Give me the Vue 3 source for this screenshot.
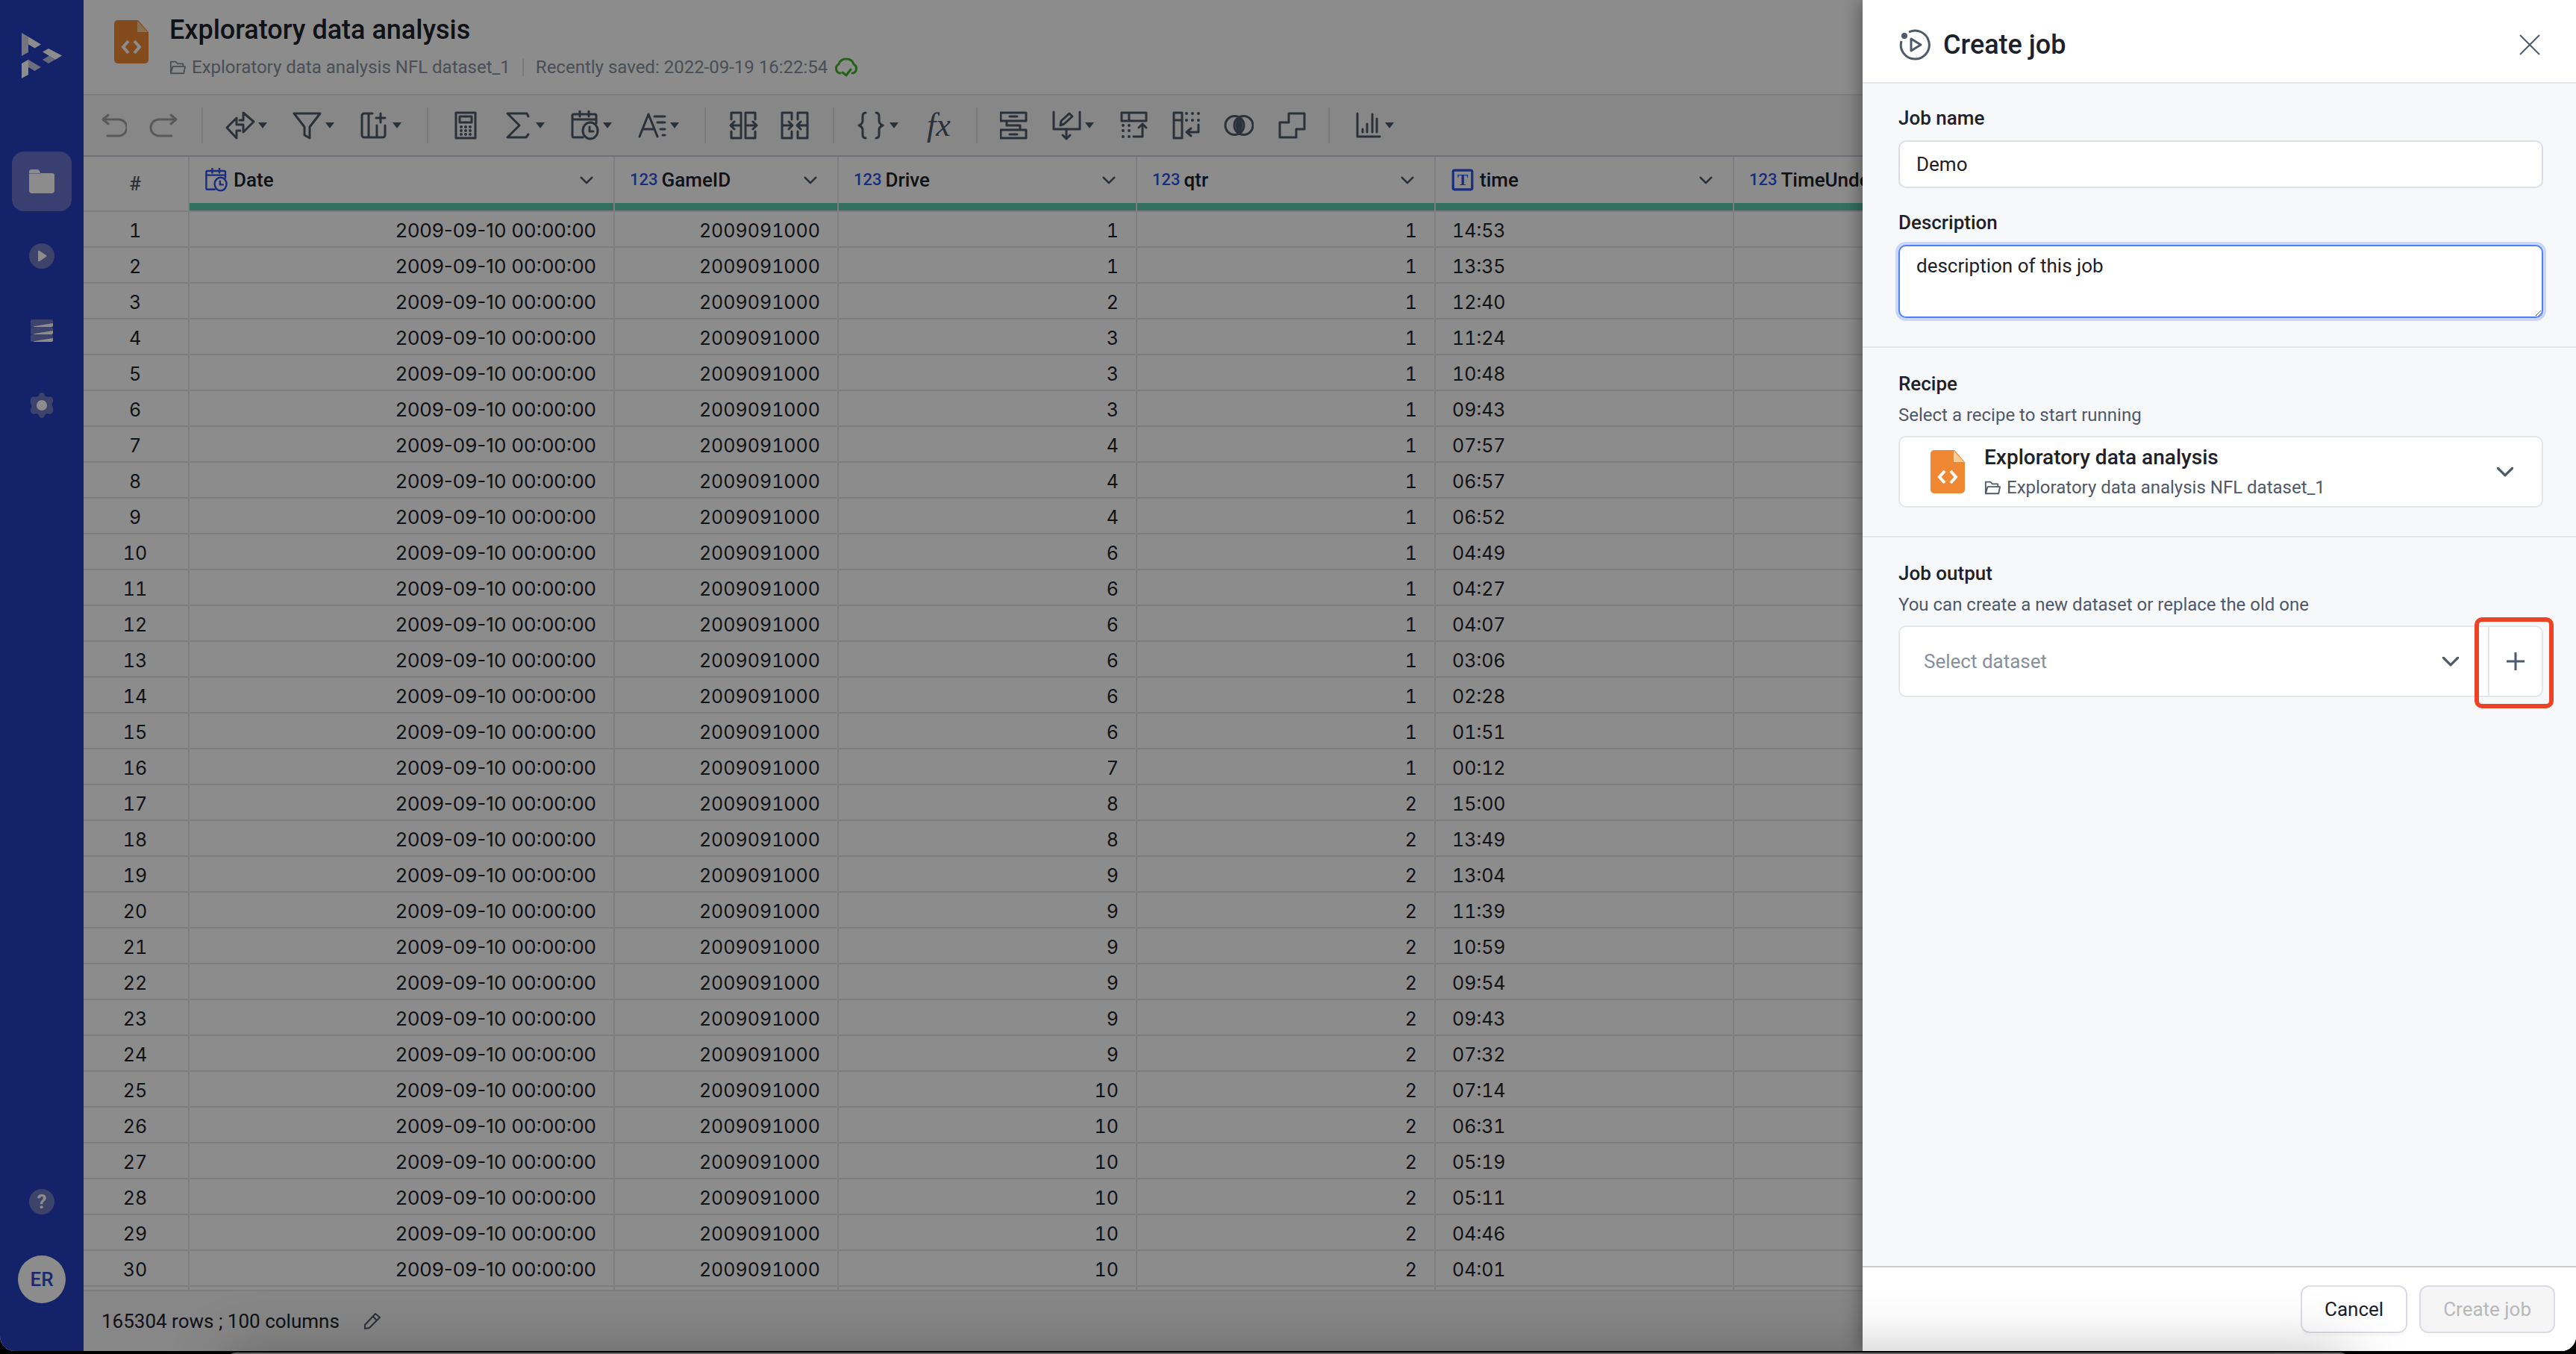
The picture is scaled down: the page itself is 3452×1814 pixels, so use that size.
<template>
  <div class="frame">
    <div class="shell">
      <!-- side navigation -->
      <nav class="sidebar">
        <svg class="logo" viewBox="28 42 56 64" aria-hidden="true">
          <path d="M29 44 55 59.500 46.500 64.500 38 59.500V49z" fill="#fff" />
          <path d="M29 44 38 49.500V70L29 75z" fill="#d3d6e6" />
          <path d="M65 65 83 74.500 74 80 57 69.500z" fill="#fff" />
          <path d="M83 74.500 65 85 57 80 66 74.500 74 80z" fill="#b9c0e6" />
          <path d="M38 80 55 90 46.500 95 38 90z" fill="#c6cbe6" />
          <path d="M29 85 38 80V100L29 105z" fill="#fff" />
        </svg>
        <button class="nav-btn active" aria-label="Projects">
          <svg viewBox="0 0 36 36">
            <path d="M1 10V5a3 3 0 0 1 3-3h8q3 0 4 5H32a3 3 0 0 1 3 3V30a4 4 0 0 1-4 4H5a4 4 0 0 1-4-4z" fill="#fff" />
            <path d="M1 7.500H16" stroke="#b4b9dc" stroke-width="1" />
          </svg>
        </button>
        <button class="nav-btn" aria-label="Jobs">
          <svg viewBox="0 0 36 36">
            <circle cx="18" cy="18" r="17" fill="#707ac2" />
            <path d="M13 12q0-2 2-1l9 6q1 1 0 2l-9 6q-2 1-2-1z" fill="#fff" />
          </svg>
        </button>
        <button class="nav-btn" aria-label="Datasets">
          <svg viewBox="0 0 36 36">
            <g v-for="y in [3, 13, 23]" :key="y">
              <rect x="3" :y="y" width="30" height="10" rx="2" fill="#707ac2" />
              <path :d="`M8 ${y + 9} 33 ${y + 5}v3q0 2-2 2H7z`" fill="#fff" />
            </g>
          </svg>
        </button>
        <button class="nav-btn" aria-label="Settings">
          <svg viewBox="0 0 36 36">
            <path d="M18 1q3 0 4 4l3 2q4-1 6 0 3 3 2 6-2 3-1 5t1 5q1 3-2 6-2 1-6 0l-3 2q-1 4-4 4t-4-4l-3-2q-4 1-6 0-3-3-2-6 2-3 1-5T3 13q-1-3 2-6 2-1 6 0l3-2q1-4 4-4z" fill="#707ac2" />
            <circle cx="18" cy="18" r="7" fill="#fff" />
          </svg>
        </button>
        <span class="spacer"></span>
        <button class="help" aria-label="Help">?</button>
        <button class="avatar">ER</button>
      </nav>

      <!-- recipe workspace -->
      <main class="workspace">
        <header class="page-head">
          <svg class="file-icon" viewBox="0 0 46 58"><use href="#file" /></svg>
          <div>
            <h1 class="page-title">Exploratory data analysis</h1>
            <div class="meta">
              <svg class="folder-icon" viewBox="0 0 24 22"><use href="#folder" /></svg>
              <span>Exploratory data analysis NFL dataset_1</span>
              <i class="meta-line"></i>
              <span>Recently saved: 2022-09-19 16:22:54</span>
              <svg class="cloud" viewBox="0 0 34 26">
                <path d="M9 21H8A6.500 6.500 0 0 1 7 9Q9 2 17 2T27 9A6.500 6.500 0 0 1 26 21H25M12 20 17 24 23 16" />
              </svg>
            </div>
          </div>
        </header>

        <div class="toolbar">
          <template v-for="(tool, i) in tools" :key="i">
            <i v-if="tool === '|'" class="tool-line"></i>
            <button v-else class="tool" :class="{ muted: tool.muted }" :aria-label="tool.name">
              <span v-if="tool.text" class="fx">{{ tool.text }}</span>
              <svg v-else class="tool-icon" viewBox="0 0 40 40">
                <path :d="tool.d" />
                <path v-if="tool.fill" :d="tool.fill" class="solid" />
                <path v-if="tool.dots" :d="tool.dots" class="dots" />
              </svg>
              <svg v-if="tool.menu" class="caret" viewBox="0 0 12 8"><path d="M0 0H12L6 8z" /></svg>
            </button>
          </template>
        </div>

        <div class="grid-wrap">
          <table class="grid">
            <colgroup>
              <col class="c-num" />
              <col class="c-date" />
              <col class="c-game" />
              <col class="c-std" />
              <col class="c-std" />
              <col class="c-std" />
              <col />
            </colgroup>
            <thead>
              <tr>
                <th class="num">#</th>
                <th v-for="col in columns" :key="col.name">
                  <div class="col-head">
                    <svg v-if="col.type === 'date'" class="type-icon" viewBox="0 0 40 40">
                      <path :d="calendar" />
                    </svg>
                    <svg v-else-if="col.type === 'text'" class="type-icon" viewBox="0 0 30 30">
                      <rect x="3" y="3" width="24" height="24" rx="2" />
                      <text x="15" y="22" class="type-t">T</text>
                    </svg>
                    <span v-else class="type-123">123</span>
                    <span class="col-name">{{ col.name }}</span>
                    <svg class="chev small" viewBox="0 0 20 12"><path d="M2 2 10 10 18 2" /></svg>
                  </div>
                  <div class="quality"></div>
                </th>
              </tr>
            </thead>
            <tbody>
              <tr v-for="(row, i) in rows" :key="i">
                <td class="num">{{ i + 1 }}</td>
                <td class="date">2009-09-10 00:00:00</td>
                <td>2009091000</td>
                <td>{{ row[0] }}</td>
                <td>{{ row[1] }}</td>
                <td class="left">{{ row[2] }}</td>
                <td></td>
              </tr>
              <tr>
                <td v-for="n in 7" :key="n"></td>
              </tr>
            </tbody>
          </table>
        </div>

        <footer class="status">
          <span>165304 rows ; 100 columns</span>
          <button class="edit" aria-label="Edit columns">
            <svg viewBox="0 0 24 24">
              <path d="M2 22V17L16 2 22 7 8 21zM13 6 18 11" />
            </svg>
          </button>
        </footer>
      </main>

      <div class="mask"></div>

      <!-- create job drawer -->
      <aside class="drawer">
        <header class="drawer-head">
          <svg class="job-icon" viewBox="0 0 42 42">
            <path d="M13 4A19 19 0 1 1 3 16M16 13V29L29 21z" />
            <circle cx="7" cy="9" r="4" />
          </svg>
          <h2 class="drawer-title">Create job</h2>
          <button class="close" aria-label="Close">
            <svg viewBox="0 0 28 28"><path d="M1 1 27 27M27 1 1 27" /></svg>
          </button>
        </header>

        <div class="drawer-body">
          <section class="block">
            <label class="label" for="job-name">Job name</label>
            <input id="job-name" v-model="jobName" class="text-box" type="text" />
            <label class="label second" for="job-desc">Description</label>
            <textarea id="job-desc" ref="descBox" v-model="description" class="text-box area" spellcheck="false"></textarea>
          </section>

          <section class="block">
            <h3 id="recipe-label" class="label">Recipe</h3>
            <p class="hint">Select a recipe to start running</p>
            <button class="recipe" aria-haspopup="listbox" aria-labelledby="recipe-label">
              <svg class="file-icon" viewBox="0 0 46 58"><use href="#file" /></svg>
              <span class="recipe-text">
                <span class="recipe-name">Exploratory data analysis</span>
                <span class="recipe-path">
                  <svg class="folder-icon" viewBox="0 0 24 22"><use href="#folder" /></svg>
                  Exploratory data analysis NFL dataset_1
                </span>
              </span>
              <svg class="chev" viewBox="0 0 20 12"><path d="M1 1 10 10 19 1" /></svg>
            </button>
          </section>

          <section class="block">
            <label class="label" for="job-output">Job output</label>
            <p class="hint">You can create a new dataset or replace the old one</p>
            <div class="output">
              <select id="job-output" v-model="dataset" class="dataset">
                <option value="">Select dataset</option>
              </select>
              <svg class="chev" viewBox="0 0 20 12"><path d="M1 1 10 10 19 1" /></svg>
              <button class="add" aria-label="New dataset">
                <svg viewBox="0 0 24 24"><path d="M12 0V24M0 12H24" /></svg>
              </button>
              <span class="highlight"></span>
            </div>
          </section>
        </div>

        <footer class="drawer-foot">
          <button class="btn">Cancel</button>
          <button class="btn" disabled>Create job</button>
        </footer>
      </aside>
    </div>
    <div class="dock"></div>

    <!-- shared shapes -->
    <svg class="defs" aria-hidden="true">
      <symbol id="file" viewBox="0 0 46 58">
        <path d="M5 0H32L46 16V53a5 5 0 0 1-5 5H5a5 5 0 0 1-5-5V5a5 5 0 0 1 5-5z" fill="#ef8733" />
        <path d="M31 1 45 16H31z" fill="#f8cd93" />
        <path d="M19 28 12 36 19 44M27 28 34 36 27 44" fill="none" stroke="#fff" stroke-width="4" />
      </symbol>
      <symbol id="folder" viewBox="0 0 24 22">
        <path d="M2 20V3H9L12 6H20V10M2 20 5 10H23L21 20z" fill="none" stroke="currentColor" stroke-width="2" stroke-linejoin="round" />
      </symbol>
    </svg>
  </div>
</template>

<script setup>
import { ref, onMounted } from 'vue';

const jobName = ref('Demo');
const description = ref('description of this job');
const dataset = ref('');
const descBox = ref(null);

const calendar = 'M17 36H5a2 2 0 0 1-2-2V7a2 2 0 0 1 2-2H33a2 2 0 0 1 2 2V17M3 12H35M13 1V8M25 1V8M37 27A10 11 0 1 1 17 27A10 11 0 1 1 37 27M26 22V28H31';

const tools = [
  { name: 'Undo', muted: true, d: 'M15 6 8 12 15 18M8 12H29a11 11 0 0 1 0 22H14' },
  { name: 'Redo', muted: true, d: 'M29 6 36 12 29 18M36 12H13a11 11 0 0 0 0 22H30' },
  '|',
  { name: 'Convert', menu: true, d: 'M15 10V19H24V29L38 15 24 3V13H19M15 10 2 23 15 37V27H20' },
  { name: 'Filter', menu: true, d: 'M2 4H37L23 22V37L16 33V22z' },
  { name: 'Add column', menu: true, d: 'M17 4H6a3 3 0 0 0-3 3V33a3 3 0 0 0 3 3H31a3 3 0 0 0 3-3V20M12 4V36M23 20V36M28 4V16M22 10H34' },
  '|',
  { name: 'Calculate', d: 'M7 3H33V37H7zM12 8H28V16H12z', dots: 'M14 22h0M20 22h0M26 22h0M14 27h0M20 27h0M26 27h0M14 32h0M20 32h0M26 32h0' },
  { name: 'Aggregate', menu: true, d: 'M34 8 32 4H6L22 20 6 36H31L34 32' },
  { name: 'Date', menu: true, d: calendar },
  { name: 'Text', menu: true, d: 'M3 35 15 5 27 35M7 25H23M23 8H37M27 16H37M31 25H37M34 33H37' },
  '|',
  { name: 'Split column', d: 'M4 12V3H17V37H4V28M36 12V3H23V37H36V28M17 20H4M8 15 3 20 8 25M23 20H36M33 15 38 20 33 25' },
  { name: 'Merge column', d: 'M15 12V3H2V37H15V28M23 12V3H36V37H23V28M2 20H15M11 15 16 20 11 25M36 20H23M27 15 22 20 27 25' },
  '|',
  { name: 'Object', menu: true, d: 'M12 3Q8 3 8 8V14Q8 18 3 20 8 22 8 26V32Q8 37 12 37M26 3Q30 3 30 8V14Q30 18 35 20 30 22 30 26V32Q30 37 26 37' },
  { name: 'Formula', text: 'fx' },
  '|',
  { name: 'Group', d: 'M1 3H35V14H1zM1 26H35V37H1zM13 8H23M13 32H23M9 14V20H27V26' },
  { name: 'Replace', menu: true, d: 'M2 2V25H37V2M19 25V38M14 33 19 38 24 33M11 20 12 14 23 4 27 8 16 18z' },
  { name: 'Unpivot', d: 'M3 3H36V14H3zM13 3V14M19 35H31V18M26 23 31 18 36 23', dots: 'M5 20h0M13 20h0M5 27h0M13 27h0M5 35h0M13 35h0' },
  { name: 'Pivot', d: 'M3 3H14V37H3zM3 13H14M36 19V29H20M26 24 20 29 26 34', dots: 'M20 4h0M28 4h0M36 4h0M20 13h0M28 13h0M36 13h0' },
  { name: 'Join', d: 'M2 20a12 12 0 1 1 25 0a12 12 0 1 1-25 0M14 20a12 12 0 1 1 25 0a12 12 0 1 1-25 0', fill: 'M20.500 11Q27 20 20.500 29 14 20 20.500 11z' },
  { name: 'Union', d: 'M17 4H38V25H27V36H5V16H17z' },
  '|',
  { name: 'Chart', menu: true, d: 'M7 4V35H37M14 25V29M20 18V29M27 5V29M33 11V29' }
];

const columns = [
  { name: 'Date', type: 'date' },
  { name: 'GameID', type: 'number' },
  { name: 'Drive', type: 'number' },
  { name: 'qtr', type: 'number' },
  { name: 'time', type: 'text' },
  { name: 'TimeUnder', type: 'number' }
];

// drive, quarter, clock
const rows = [
  [1, 1, '14:53'], [1, 1, '13:35'], [2, 1, '12:40'], [3, 1, '11:24'], [3, 1, '10:48'],
  [3, 1, '09:43'], [4, 1, '07:57'], [4, 1, '06:57'], [4, 1, '06:52'], [6, 1, '04:49'],
  [6, 1, '04:27'], [6, 1, '04:07'], [6, 1, '03:06'], [6, 1, '02:28'], [6, 1, '01:51'],
  [7, 1, '00:12'], [8, 2, '15:00'], [8, 2, '13:49'], [9, 2, '13:04'], [9, 2, '11:39'],
  [9, 2, '10:59'], [9, 2, '09:54'], [9, 2, '09:43'], [9, 2, '07:32'], [10, 2, '07:14'],
  [10, 2, '06:31'], [10, 2, '05:19'], [10, 2, '05:11'], [10, 2, '04:46'], [10, 2, '04:01']
];

onMounted(() => {
  const el = descBox.value;
  el.focus();
  el.setSelectionRange(el.value.length, el.value.length);
});
</script>

<style>
body { background: #000; }
</style>

<style scoped>
.frame {
  position: relative;
  display: flex;
  flex-direction: column;
  height: 100vh;
  padding-bottom: 4px;
  box-sizing: border-box;
  overflow: hidden;
  font-family: Roboto, "Liberation Sans", sans-serif;
  font-size: 26px;
  color: #1d2129;
}
.shell {
  position: relative;
  flex: 1;
  min-height: 0;
  display: flex;
  overflow: hidden;
  border-radius: 0 0 20px 20px;
  background: #fff;
}
button { padding: 0; border: 0; background: none; font: inherit; color: inherit; cursor: pointer; }
h1, h2, h3, p { margin: 0; font-weight: 500; }
svg { display: block; flex: none; }
.defs { position: absolute; width: 0; height: 0; }

/* --- sidebar --- */
.sidebar {
  width: 112px;
  flex: none;
  display: flex;
  flex-direction: column;
  align-items: center;
  padding: 42px 0 64px;
  box-sizing: border-box;
  background: #263ebf;
}
.logo { width: 56px; height: 64px; margin-bottom: 97px; }
.nav-btn {
  display: flex;
  align-items: center;
  justify-content: center;
  width: 80px;
  height: 80px;
  margin-bottom: 20px;
  border-radius: 16px;
}
.nav-btn svg { width: 36px; height: 36px; }
.nav-btn.active { background: #6b74ce; }
.spacer { flex: 1; }
.help {
  width: 34px;
  height: 34px;
  margin-bottom: 55px;
  border-radius: 50%;
  background: #707ac2;
  color: #fff;
  font-weight: 700;
  line-height: 34px;
}
.avatar {
  width: 64px;
  height: 64px;
  border-radius: 50%;
  background: #fff;
  color: #3048d0;
  font-weight: 500;
}

/* --- page header --- */
.workspace { flex: 1; min-width: 0; display: flex; flex-direction: column; }
.page-head {
  display: flex;
  gap: 28px;
  height: 126px;
  padding-left: 41px;
  border-bottom: 2px solid #e5e6eb;
}
.page-head .file-icon { margin-top: 27px; }
.file-icon { width: 46px; height: 58px; }
.page-title { margin-top: 18px; font-size: 36px; line-height: 44px; }
.meta { display: flex; align-items: center; margin-top: 12px; font-size: 24px; line-height: 32px; color: #86909c; }
.folder-icon { width: 22px; height: 22px; margin-right: 8px; }
.meta-line { width: 2px; height: 24px; margin: 0 16px; background: #dcdee2; }
.cloud { width: 34px; height: 26px; margin-left: 8px; fill: none; stroke: #42b52a; stroke-width: 3; stroke-linecap: round; stroke-linejoin: round; }

/* --- toolbar --- */
.toolbar {
  display: flex;
  align-items: center;
  gap: 30px;
  height: 80px;
  padding-left: 18px;
  border-bottom: 2px solid #cdced9;
  background: #f6f6f6;
}
.tool { display: flex; align-items: center; color: #4e5969; }
.tool.muted { color: #a3a3a3; }
.tool-icon { width: 40px; height: 40px; fill: none; stroke: currentColor; stroke-width: 3; stroke-linecap: round; stroke-linejoin: round; }
.tool-icon .solid { fill: currentColor; }
.tool-icon .dots { stroke-width: 4; }
.fx { width: 40px; text-align: center; font: italic 44px/60px "Liberation Serif", serif; }
.caret { width: 12px; height: 8px; margin: 0 4px; fill: currentColor; }
.tool-line { width: 2px; height: 48px; background: #dcdce0; }

/* --- data grid --- */
.grid-wrap { flex: 1; min-height: 0; overflow: hidden; }
.grid { width: 100%; table-layout: fixed; border-collapse: separate; border-spacing: 0; }
.c-num { width: 142px; }
.c-date { width: 570px; }
.c-game { width: 300px; }
.c-std { width: 400px; }
th, td { border-right: 2px solid #e5e6eb; border-bottom: 2px solid #e5e6eb; box-sizing: border-box; }
th { height: 74px; padding: 0; font-weight: 500; text-align: left; vertical-align: top; }
th.num { padding-right: 2px; vertical-align: middle; color: #565a60; }
td {
  height: 48px;
  padding: 4px 23px 0;
  font-family: Inter, Roboto, sans-serif;
  font-size: 25px;
  font-variant-numeric: tabular-nums;
  line-height: 42px;
  text-align: right;
}
.num { padding-right: 2px; padding-left: 0; text-align: center; }
td.date { font-size: 26px; font-variant-numeric: normal; }
td.left { padding-left: 22px; text-align: left; }
.col-head { display: flex; align-items: center; height: 62px; padding: 0 27px 0 20px; line-height: 32px; }
.col-name { flex: 1; margin-left: 7px; }
.quality { height: 10px; background: #60ccac; }
.type-icon { width: 32px; height: 32px; fill: none; stroke: #3050e8; stroke-width: 3; stroke-linecap: round; }
.type-t { fill: #3050e8; stroke: none; font: bold 20px "Liberation Serif", serif; text-anchor: middle; }
.type-123 { font-size: 22px; font-weight: 500; color: #3050e8; }
.type-123 + .col-name { margin-left: 5px; }
.chev { width: 22px; height: 13px; fill: none; stroke: #4e5969; stroke-width: 3; stroke-linecap: round; stroke-linejoin: round; }
.chev.small { width: 18px; height: 11px; }

.status {
  display: flex;
  align-items: center;
  gap: 32px;
  height: 80px;
  padding-left: 24px;
  border-top: 2px solid #e5e6eb;
  background: #f6f6f6;
}
.edit svg { width: 24px; height: 24px; fill: none; stroke: #4e5969; stroke-width: 2; stroke-linejoin: round; }

/* --- drawer --- */
.mask { position: absolute; inset: 0; background: rgba(0, 0, 0, 0.45); }
.drawer {
  position: absolute;
  top: 0;
  right: 0;
  bottom: 0;
  display: flex;
  flex-direction: column;
  width: 956px;
  background: #f7f8fa;
  box-shadow: -6px 0 20px rgba(0, 0, 0, 0.3);
}
.drawer-head {
  display: flex;
  align-items: center;
  height: 112px;
  padding: 10px 48px 0 49px;
  box-sizing: border-box;
  border-bottom: 2px solid #e5e6eb;
  background: #fff;
}
.job-icon { width: 42px; height: 42px; fill: none; stroke: #4e5969; stroke-width: 3; stroke-linejoin: round; }
.job-icon circle { fill: #4e5969; stroke: none; }
.drawer-title { flex: 1; margin-left: 17px; font-size: 36px; line-height: 44px; }
.close svg { width: 28px; height: 28px; fill: none; stroke: #4e5969; stroke-width: 2; }
.drawer-body { flex: 1; min-height: 0; }
.block { padding: 30px 44px 38px 48px; border-bottom: 2px solid #e5e6eb; }
.block:last-child { border-bottom: 0; }
.label { display: block; margin-bottom: 14px; font-size: 26px; font-weight: 500; line-height: 32px; }
.label.second { margin-top: 30px; }
.text-box {
  display: block;
  width: 100%;
  height: 64px;
  padding: 0 22px;
  box-sizing: border-box;
  border: 2px solid #dcdee5;
  border-radius: 10px;
  background: #fff;
  color: inherit;
  font: inherit;
  outline: none;
}
.area { height: 98px; padding: 8px 22px; line-height: 36px; resize: vertical; }
.text-box:focus { border-color: #4d7ff7; box-shadow: 0 0 0 4px #ccd6fa; }
.hint { font-size: 24px; font-weight: 400; line-height: 32px; color: #4e5969; }
h3.label, .label:has(+ .hint) { margin: 2px 0 10px; }
.recipe, .output {
  display: flex;
  align-items: center;
  width: 100%;
  height: 96px;
  margin-top: 12px;
  box-sizing: border-box;
  border: 2px solid #e5e6eb;
  border-radius: 10px;
  background: #fff;
}
.recipe { padding: 0 38px 0 41px; text-align: left; }
.recipe-text { flex: 1; margin-left: 26px; }
.recipe-name { display: block; font-size: 28px; font-weight: 500; line-height: 36px; }
.recipe-path { display: flex; align-items: center; margin-top: 6px; font-size: 24px; line-height: 32px; color: #4e5969; }
.output { position: relative; }
.dataset {
  flex: 1;
  height: 100%;
  padding: 0 32px;
  border: 0;
  background: none;
  color: #86909c;
  font: inherit;
  appearance: none;
  outline: none;
}
.output .chev { margin-right: 39px; }
.add { display: flex; align-items: center; justify-content: center; width: 72px; height: 100%; border-left: 2px solid #e5e6eb; }
.add svg { width: 24px; height: 24px; stroke: #4e5969; stroke-width: 3; }
.highlight {
  position: absolute;
  top: -13px;
  right: -16px;
  width: 106px;
  height: 122px;
  box-sizing: border-box;
  border: 6px solid #ec4226;
  border-radius: 10px;
  pointer-events: none;
}
.drawer-foot {
  display: flex;
  justify-content: flex-end;
  gap: 16px;
  padding: 24px 28px;
  border-top: 2px solid #c9cbd6;
  background: #fff;
}
.btn {
  height: 64px;
  padding: 0 30px;
  border: 2px solid #dcdce6;
  border-radius: 12px;
  background: #fff;
  box-shadow: 0 4px 0 rgba(0, 0, 0, 0.02);
}
.btn:disabled { background: #f5f5f5; box-shadow: none; color: #b8b8b8; }

/* panel peeking in from below, casts its shadow over the window */
.dock {
  position: absolute;
  top: calc(100% - 2px);
  left: 304px;
  right: 304px;
  height: 200px;
  border-radius: 12px;
  background: #666;
  box-shadow: 0 0 80px rgba(0, 0, 0, 0.25);
}
</style>
